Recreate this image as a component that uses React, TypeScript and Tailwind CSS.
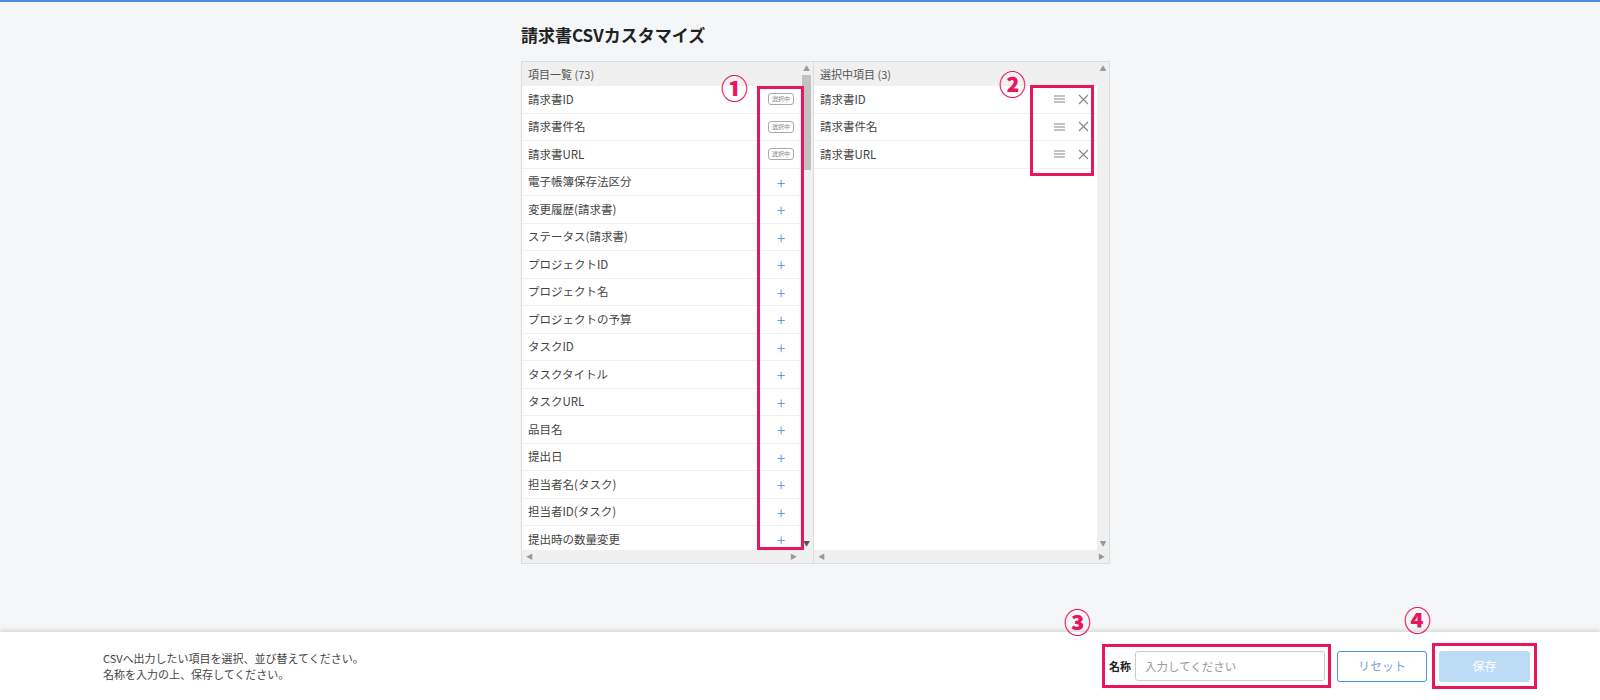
import React from "react";

const left = ["請求書ID","請求書件名","請求書URL","電子帳簿保存法区分","変更履歴(請求書)","ステータス(請求書)","プロジェクトID","プロジェクト名","プロジェクトの予算","タスクID","タスクタイトル","タスクURL","品目名","提出日","担当者名(タスク)","担当者ID(タスク)","提出時の数量変更"];
const right = ["請求書ID","請求書件名","請求書URL"];
const font = { fontFamily: '"Noto Sans CJK JP","Noto Sans",sans-serif' };

function Circ({ n, cls }: { n: string; cls: string }) {
  return <div className={"absolute text-[27px] font-black leading-none text-[#e8175d] " + cls}>{n}</div>;
}

export default function App() {
  return (
    <div style={font} className="relative w-[1600px] h-[700px] bg-[#f5f6f8] border-t-2 border-[#4a90e2] overflow-hidden text-[#333]">
      <div className="w-[589px] ml-[521px] pt-[18px]">
        <h1 className="text-[17px] font-bold text-[#222] h-[30px] leading-[30px]">請求書CSVカスタマイズ</h1>
        <div className="relative mt-[11px] h-[503px] border border-[#ddd] bg-white flex">
          <div className="w-[292px] flex flex-col border-r border-[#ddd]">
            <div className="flex flex-1 min-h-0">
              <div className="flex-1 flex flex-col overflow-hidden">
                <div className="h-[24px] bg-[#f0f0f0] text-[11px] text-[#555] px-[6px] leading-[24px] shrink-0">項目一覧 (73)</div>
                {left.map((t, i) => (
                  <div key={t} className="h-[27.5px] shrink-0 flex items-center justify-between pl-[6px] pr-[6px] border-b border-[#eef0f3] text-[11.5px] text-[#444]">
                    <span>{t}</span>
                    {i < 3 ? (
                      <span className="border border-[#aaa] rounded-[3px] text-[6px] text-[#888] px-[3px] h-[12px] leading-[10px]">選択中</span>
                    ) : (
                      <span className="text-[#4a90e2] text-[16px] font-light w-[26px] text-center leading-none">+</span>
                    )}
                  </div>
                ))}
              </div>
              <div className="w-[13px] bg-[#f0f0f0] flex flex-col items-center">
                <span className="text-[7px] text-[#999] h-[13px] leading-[13px]">▲</span>
                <div className="w-[9px] h-[95px] bg-[#c1c1c1]"></div>
                <div className="flex-1"></div>
                <span className="text-[7px] text-[#555] h-[13px] leading-[13px]">▼</span>
              </div>
            </div>
            <div className="h-[13px] bg-[#f0f0f0] flex items-center justify-between px-[4px] text-[7px] text-[#999]"><span>◀</span><span className="mr-[12px]">▶</span></div>
          </div>
          <div className="flex-1 flex flex-col">
            <div className="flex flex-1 min-h-0">
              <div className="flex-1 flex flex-col">
                <div className="h-[24px] bg-[#f0f0f0] text-[11px] text-[#555] px-[6px] leading-[24px]">選択中項目 (3)</div>
                {right.map((t) => (
                  <div key={t} className="h-[27.5px] flex items-center justify-between pl-[6px] pr-[8px] border-b border-[#eef0f3] text-[11.5px] text-[#444]">
                    <span>{t}</span>
                    <span className="flex items-center gap-[13px]">
                      <svg width="11" height="8" viewBox="0 0 11 8" stroke="#888" strokeWidth="1.2"><path d="M0 1h11M0 4h11M0 7h11"/></svg>
                      <svg width="11" height="11" viewBox="0 0 11 11" stroke="#888" strokeWidth="1.2"><path d="M1 1l9 9M10 1l-9 9"/></svg>
                    </span>
                  </div>
                ))}
              </div>
              <div className="w-[12px] bg-[#f0f0f0] flex flex-col items-center justify-between">
                <span className="text-[7px] text-[#999] h-[13px] leading-[13px]">▲</span>
                <span className="text-[7px] text-[#999] h-[13px] leading-[13px]">▼</span>
              </div>
            </div>
            <div className="h-[13px] bg-[#f0f0f0] flex items-center justify-between px-[4px] text-[7px] text-[#999]"><span>◀</span><span>▶</span></div>
          </div>
          <div className="absolute left-[235px] top-[24px] w-[47px] h-[464px] border-[3px] border-[#e8175d]"></div>
          <Circ n="①" cls="left-[199px] top-[12px]" />
          <div className="absolute left-[508px] top-[23px] w-[64px] h-[91px] border-[3px] border-[#e8175d]"></div>
          <Circ n="②" cls="left-[477px] top-[8px]" />
        </div>
      </div>

      <div className="absolute left-0 right-0 bottom-0 h-[68px] bg-white shadow-[0_-2px_4px_rgba(0,0,0,0.12)] flex items-center">
        <div className="ml-[103px] text-[11px] text-[#444] leading-[16px]">
          <div>CSVへ出力したい項目を選択、並び替えてください。</div>
          <div>名称を入力の上、保存してください。</div>
        </div>
        <div className="ml-auto mr-[63px] flex items-center relative">
          <div className="border-[3px] border-[#e8175d] h-[44px] w-[229px] flex items-center pl-[4px] gap-[4px]">
            <span className="text-[11px] font-bold text-[#222]">名称</span>
            <div className="w-[190px] h-[30px] border border-[#ccc] rounded-[3px] text-[11.5px] text-[#999] pl-[9px] leading-[28px]">入力してください</div>
          </div>
          <div className="ml-[6px] w-[90px] h-[31px] border border-[#4a90e2] rounded-[3px] text-[12px] text-[#7aa6e0] flex items-center justify-center">リセット</div>
          <div className="ml-[5px] border-[3px] border-[#e8175d] w-[105px] h-[46px] flex items-center justify-center">
            <div className="w-[91px] h-[31px] bg-[#bcdcf5] rounded-[3px] text-[12px] text-white flex items-center justify-center">保存</div>
          </div>
          <Circ n="③" cls="left-[-38px] top-[-35px]" />
          <Circ n="④" cls="left-[302px] top-[-37px]" />
        </div>
      </div>
    </div>
  );
}
